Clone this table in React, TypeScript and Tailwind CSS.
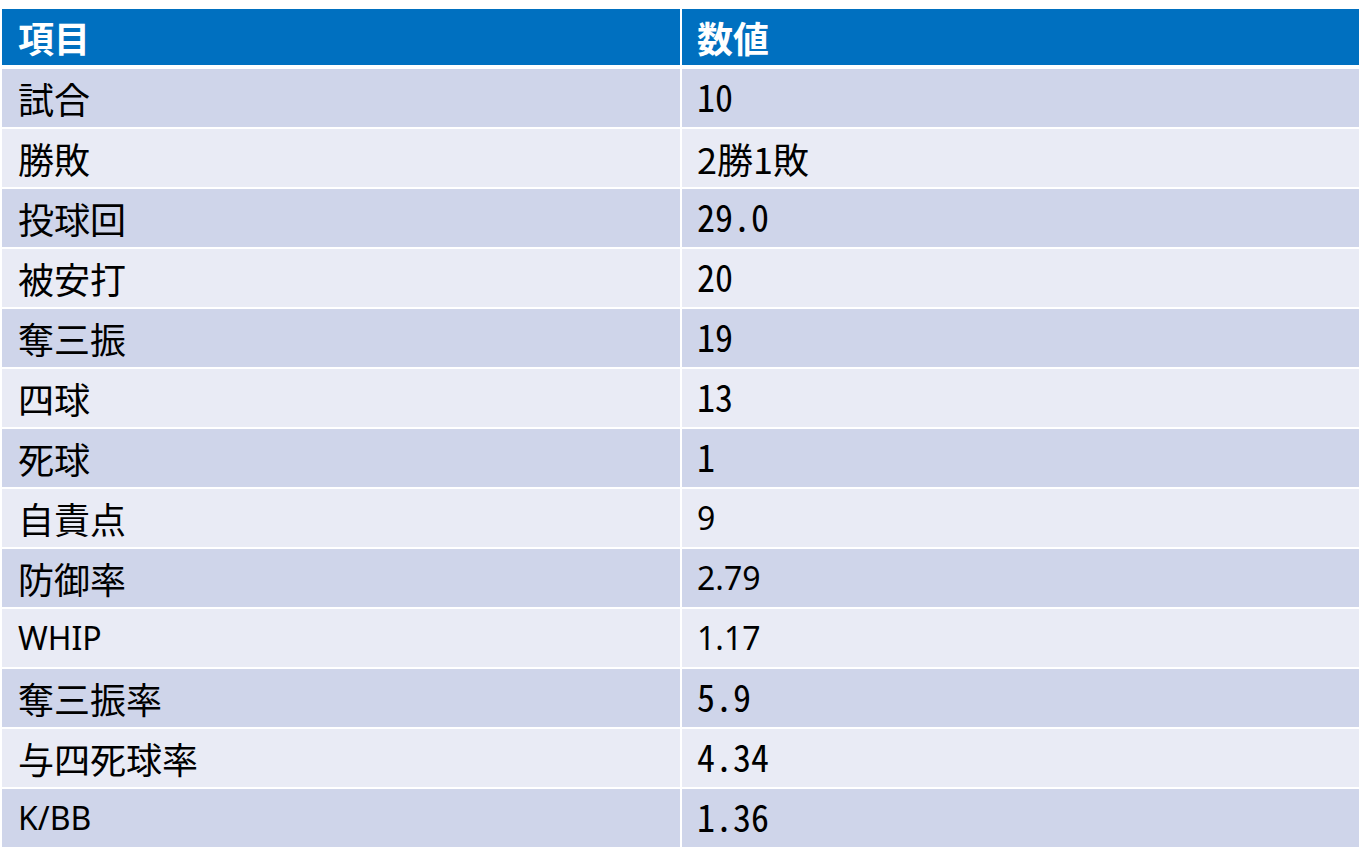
const rows: { label: string; value: string; kind: "cjk" | "latin" | "half" }[] = [
  { label: "試合", value: "10", kind: "half" },
  { label: "勝敗", value: "2勝1敗", kind: "cjk" },
  { label: "投球回", value: "29.0", kind: "half" },
  { label: "被安打", value: "20", kind: "half" },
  { label: "奪三振", value: "19", kind: "half" },
  { label: "四球", value: "13", kind: "half" },
  { label: "死球", value: "1", kind: "half" },
  { label: "自責点", value: "9", kind: "latin" },
  { label: "防御率", value: "2.79", kind: "latin" },
  { label: "WHIP", value: "1.17", kind: "latin" },
  { label: "奪三振率", value: "5.9", kind: "half" },
  { label: "与四死球率", value: "4.34", kind: "half" },
  { label: "K/BB", value: "1.36", kind: "half" },
];

const cjk = "font-['Noto_Sans_CJK_JP',sans-serif] text-[36px]";
const latin = "font-['Noto_Sans','Noto_Sans_CJK_JP',sans-serif] text-[32px]";
const half = "font-['Noto_Sans_CJK_JP',sans-serif] text-[36px] [font-feature-settings:'hwid'] pb-[6px]";

function cellFont(kind: "cjk" | "latin" | "half") {
  if (kind === "latin") return latin;
  if (kind === "half") return half;
  return cjk;
}

export default function App() {
  return (
    <div className="min-h-[864px] w-[1365px] bg-white pl-[2px] pt-[9px]">
      <div className="flex w-[1357px] flex-col gap-[2px]">
        <div className="mb-[2px] grid h-[56px] grid-cols-[678px_677px] gap-x-[2px]">
          <div className={`flex items-center bg-[#0070c0] pl-[16px] font-bold leading-none text-white ${cjk}`}>項目</div>
          <div className={`flex items-center bg-[#0070c0] pl-[15px] font-bold leading-none text-white ${cjk}`}>数値</div>
        </div>
        {rows.map((r, i) => {
          const bg = i % 2 === 0 ? "bg-[#cfd5ea]" : "bg-[#e9ebf5]";
          const labelFont = /^[A-Za-z/]+$/.test(r.label) ? latin : cjk;
          return (
            <div key={r.label} className="grid h-[58px] grid-cols-[678px_677px] gap-x-[2px]">
              <div className={`flex items-center ${bg} pl-[16px] leading-none text-black ${labelFont}`}>{r.label}</div>
              <div className={`flex items-center ${bg} pl-[15px] leading-none text-black ${cellFont(r.kind)}`}>
                {r.kind === "half" ? (
                  <span className="inline-block origin-center scale-y-[1.06]">{r.value}</span>
                ) : (
                  r.value
                )}
              </div>
            </div>
          );
        })}
      </div>
    </div>
  );
}
